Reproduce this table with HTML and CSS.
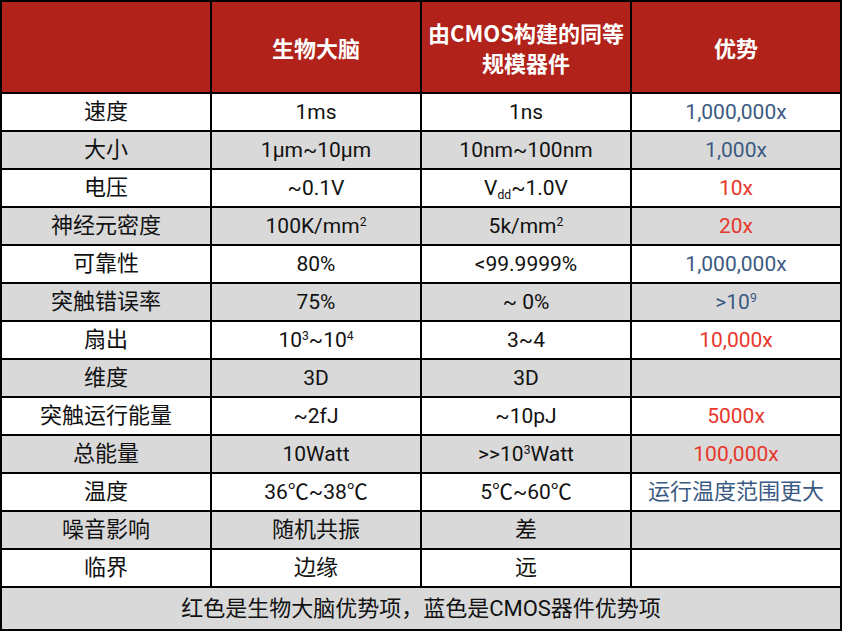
FILE: index.html
```html
<!DOCTYPE html>
<html lang="zh-CN">
<head>
<meta charset="utf-8">
<title>生物大脑与CMOS器件对比</title>
<link rel="stylesheet" href="styles.css">
</head>
<body>
<table class="cmp">
  <colgroup><col class="c"><col class="c"><col class="c"><col class="c"></colgroup>
  <thead>
    <tr class="head">
      <th></th>
      <th>生物大脑</th>
      <th>由CMOS构建的同等<br>规模器件</th>
      <th>优势</th>
    </tr>
  </thead>
  <tbody>
    <tr><td class="zh">速度</td><td>1ms</td><td>1ns</td><td class="blue">1,000,000x</td></tr>
    <tr class="alt"><td class="zh">大小</td><td>1μm~10μm</td><td>10nm~100nm</td><td class="blue">1,000x</td></tr>
    <tr><td class="zh">电压</td><td>~0.1V</td><td>V<sub>dd</sub>~1.0V</td><td class="red">10x</td></tr>
    <tr class="alt"><td class="zh">神经元密度</td><td>100K/mm<sup>2</sup></td><td>5k/mm<sup>2</sup></td><td class="red">20x</td></tr>
    <tr><td class="zh">可靠性</td><td>80%</td><td>&lt;99.9999%</td><td class="blue">1,000,000x</td></tr>
    <tr class="alt"><td class="zh">突触错误率</td><td>75%</td><td>~ 0%</td><td class="blue">&gt;10<sup>9</sup></td></tr>
    <tr><td class="zh">扇出</td><td>10<sup>3</sup>~10<sup>4</sup></td><td>3~4</td><td class="red">10,000x</td></tr>
    <tr class="alt"><td class="zh">维度</td><td>3D</td><td>3D</td><td></td></tr>
    <tr><td class="zh">突触运行能量</td><td>~2fJ</td><td>~10pJ</td><td class="red">5000x</td></tr>
    <tr class="alt"><td class="zh">总能量</td><td>10Watt</td><td>&gt;&gt;10<sup>3</sup>Watt</td><td class="red">100,000x</td></tr>
    <tr><td class="zh">温度</td><td>36℃~38℃</td><td>5℃~60℃</td><td class="blue zh">运行温度范围更大</td></tr>
    <tr class="alt"><td class="zh">噪音影响</td><td class="zh">随机共振</td><td class="zh">差</td><td></td></tr>
    <tr><td class="zh">临界</td><td class="zh">边缘</td><td class="zh">远</td><td></td></tr>
  </tbody>
  <tfoot>
    <tr class="foot"><td colspan="4">红色是生物大脑优势项，蓝色是CMOS器件优势项</td></tr>
  </tfoot>
</table>
</body>
</html>
```

FILE: styles.css
```css
html, body {
  margin: 0;
  padding: 0;
  background: #ffffff;
}

.cmp {
  border-collapse: separate;
  border-spacing: 0;
  table-layout: fixed;
  width: 842px;
  border-top: 2px solid #000;
  border-left: 2px solid #000;
  font-family: Roboto, "Noto Sans CJK SC", sans-serif;
  font-size: 21px;
  color: #111;
}

.cmp .c {
  width: 210px;
}

.cmp th,
.cmp td {
  border-right: 2px solid #000;
  border-bottom: 2px solid #000;
  padding: 0;
  text-align: center;
  vertical-align: middle;
  white-space: nowrap;
}

.head th {
  height: 90px;
  background: #b0221a;
  color: #ffffff;
  font-weight: 700;
  font-size: 22px;
  line-height: 30px;
  font-family: "Noto Sans CJK SC", sans-serif;
}

tbody td {
  height: 36px;
  line-height: 36px;
  background: #ffffff;
}

tbody td.zh {
  font-size: 22px;
}

tbody tr.alt td {
  background: #d9d9d9;
}

.blue {
  color: #3b5a82;
}

.red {
  color: #e8372b;
}

sup {
  font-size: 0.58em;
  line-height: 0;
  vertical-align: 0.6em;
}

sub {
  font-size: 0.58em;
  line-height: 0;
  vertical-align: -0.3em;
}

.foot td {
  height: 41px;
  line-height: 41px;
  font-size: 22px;
  background: #d9d9d9;
}
```
